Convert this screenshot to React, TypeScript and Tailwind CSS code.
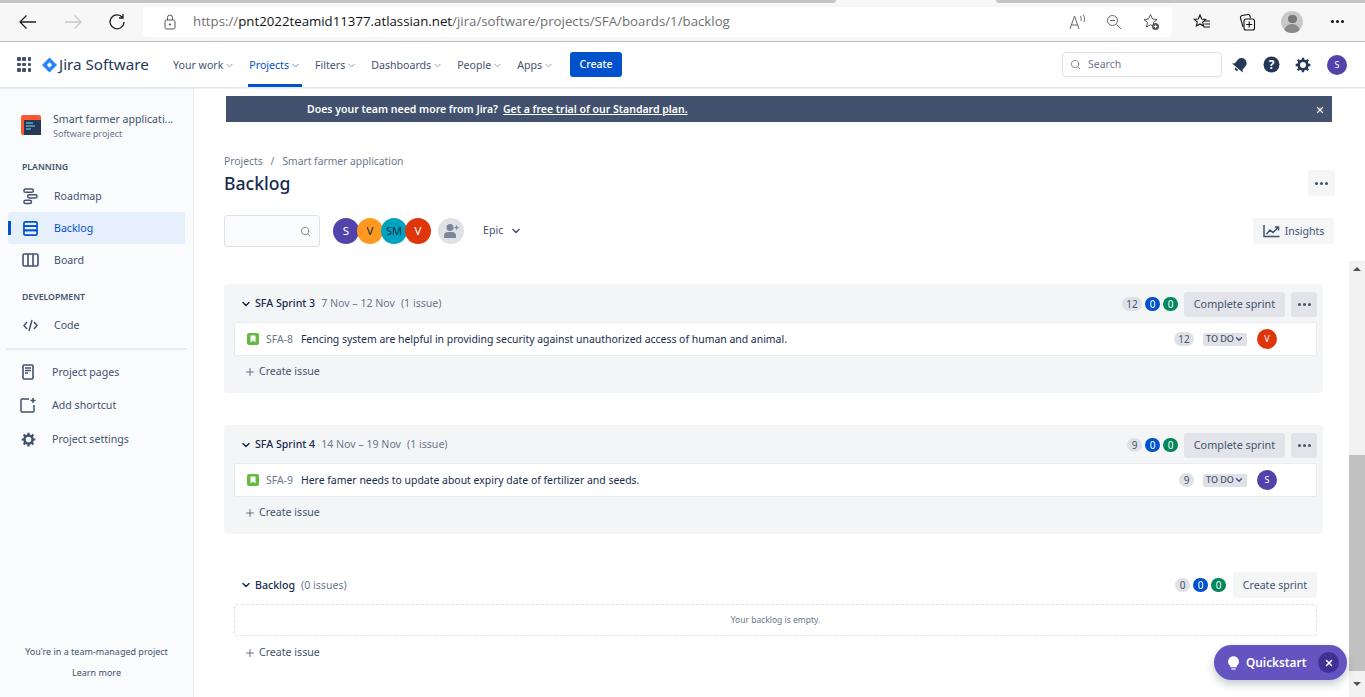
import React from "react";
import { ChevronDown, Search, Plus, X } from "lucide-react";

const font = "font-['Noto_Sans','Open_Sans',sans-serif]";

const Avatar = ({ text, color, size = "w-[26px] h-[26px]", textCls = "text-[11.5px] text-white" }: { text: string; color: string; size?: string; textCls?: string }) => (
  <div className={`${size} ${color} ${textCls} rounded-full flex items-center justify-center shrink-0`}>{text}</div>
);

const NavItem = ({ label, active }: { label: string; active?: boolean }) => (
  <div className={`relative h-full flex items-center gap-[1px] px-[1px] pt-[2px] text-[10.6px] ${active ? "text-[#0052cc]" : "text-[#42526e]"}`}>
    {label}
    <ChevronDown size={11} strokeWidth={2} className={active ? "text-[#4c7fd6]" : "text-[#8c97a8]"} />
    {active && <div className="absolute left-0 right-0 bottom-0 h-[3px] bg-[#0052cc]" />}
  </div>
);

const SideRow = ({ icon, label, active, narrow, cls = "" }: { icon: React.ReactNode; label: string; active?: boolean; narrow?: boolean; cls?: string }) => (
  <div className={`relative h-8 mx-2 rounded-[3px] flex items-center text-[10.6px] ${active ? "bg-[#e6effc] text-[#0052cc]" : "text-[#42526e]"} ${cls}`}>
    {active && <div className="absolute left-0 top-[9px] h-[14px] w-[3px] bg-[#0052cc]" />}
    <div className={`${narrow ? "w-[44px]" : "w-[46px]"} flex justify-center ${narrow ? "pr-[4px]" : "pr-[1px]"}`}>{icon}</div>
    <span className="mt-[2px]">{label}</span>
  </div>
);

const Pill = ({ n, cls }: { n: string; cls: string }) => (
  <div className={`h-[14px] min-w-[15px] rounded-full text-[10px] leading-[14px] text-center ${n === "12" ? "w-[20px]" : ""} ${cls}`}>{n}</div>
);

const Counts = ({ n }: { n: string }) => (
  <div className="flex items-center gap-[3px]">
    <Pill n={n} cls="bg-[#dfe1e6] text-[#42526e]" />
    <Pill n="0" cls="bg-[#0052cc] text-white" />
    <Pill n="0" cls="bg-[#00875a] text-white" />
  </div>
);

const CreateIssue = () => (
  <div className="flex items-center gap-[3px] pl-[20px] text-[10.6px] text-[#42526e]">
    <Plus size={12} strokeWidth={1.6} />
    Create issue
  </div>
);

const Dots = () => (
  <div className="flex gap-[2px]">
    <span className="w-[3px] h-[3px] rounded-full bg-[#42526e]" />
    <span className="w-[3px] h-[3px] rounded-full bg-[#42526e]" />
    <span className="w-[3px] h-[3px] rounded-full bg-[#42526e]" />
  </div>
);

const StoryIcon = () => (
  <svg width="12" height="12" viewBox="0 0 12 12" className="shrink-0">
    <rect width="12" height="12" rx="2" fill="#65ba43" />
    <path d="M3.5 2.5h5v7L6 7.6 3.5 9.5z" fill="#fff" />
  </svg>
);

const Sprint = ({ name, dates, issueKey, summary, points, avatar, avatarColor }: { name: string; dates: string; issueKey: string; summary: string; points: string; avatar: string; avatarColor: string }) => (
  <div className="h-[109px] rounded-[4px] bg-[#f4f5f7] pt-[6px]">
    <div className="h-[26px] flex items-center pl-[16px] pr-[6px] pt-[2px] text-[10.6px]">
      <ChevronDown size={12} strokeWidth={3} className="text-[#172b4d]" />
      <span className="ml-[3px] font-medium text-[#172b4d]">{name}</span>
      <span className="ml-[6px] text-[#6b778c]">{dates}</span>
      <span className="ml-[6px] text-[#6b778c]">(1 issue)</span>
      <div className="ml-auto flex items-center gap-[6px]">
        <Counts n={points} />
        <div className="h-[25px] w-[101px] rounded-[3px] bg-[#e2e4e9] flex items-center justify-center text-[10.8px] text-[#42526e]">Complete sprint</div>
        <div className="h-[25px] w-[26px] rounded-[3px] bg-[#e2e4e9] flex items-center justify-center"><Dots /></div>
      </div>
    </div>
    <div className="mt-[6px] ml-[10px] mr-[6px] h-[34px] bg-white border border-[#ebecf0] flex items-center pl-[12px] text-[10.45px]">
      <StoryIcon />
      <span className="ml-[7px] mt-[2px] text-[#6b778c]">{issueKey}</span>
      <span className="ml-[8px] mt-[2px] text-[#172b4d]">{summary}</span>
      <div className="ml-auto flex items-center">
        <Pill n={points} cls="bg-[#dfe1e6] text-[#42526e]" />
        <div className="ml-[9px] h-[13px] w-[44px] rounded-[2px] bg-[#dfe1e6] flex items-center pl-[3px] text-[9px] font-medium text-[#42526e]">
          TO DO
          <ChevronDown size={10} strokeWidth={3} />
        </div>
        <div className="ml-[10px] mr-[39px]">
          <Avatar text={avatar} color={avatarColor} size="w-[20px] h-[20px]" textCls="text-[9px] text-white" />
        </div>
      </div>
    </div>
    <div className="mt-[8px]"><CreateIssue /></div>
  </div>
);

const gearPath = "M12 1v5M12 18v5M1 12h5M18 12h5M4.2 4.2l3.5 3.5M16.3 16.3l3.5 3.5M4.2 19.8l3.5-3.5M16.3 7.7l3.5-3.5";

export default function App() {
  return (
    <div className={`h-screen w-full overflow-hidden flex flex-col bg-white ${font}`}>
      {/* browser chrome */}
      <div className="h-[42px] shrink-0 flex flex-col bg-[#f7f7f7] border-b border-[#bdbdbd]">
        <div className="h-[3px] flex">
          <div className="w-[836px] bg-[#c4c4c4] rounded-br-[3px]" />
          <div className="w-[160px]" />
          <div className="flex-1 bg-[#c4c4c4] rounded-bl-[3px]" />
        </div>
        <div className="flex-1 flex items-center pl-[18px] pb-[1px]">
          <svg width="20" height="16" viewBox="0 0 20 16" fill="none" stroke="#222" strokeWidth="1.3"><path d="M18 8H2M8.5 1.5 2 8l6.5 6.5" /></svg>
          <svg width="20" height="16" viewBox="0 0 20 16" fill="none" stroke="#c8c8c8" strokeWidth="1.3" className="ml-[25px]"><path d="M2 8h16M11.5 1.5 18 8l-6.5 6.5" /></svg>
          <svg width="18" height="18" viewBox="0 0 18 18" fill="none" stroke="#222" strokeWidth="1.3" className="ml-[25px]"><path d="M14.5 4.5A7 7 0 1 0 16 9M15 1v4h-4" /></svg>
          <div className="ml-[17px] h-[30px] w-[1029px] rounded-[4px] bg-white flex items-center pl-[20px] pr-[12px]">
            <svg width="14" height="16" viewBox="0 0 14 16" fill="none" stroke="#555" strokeWidth="1"><rect x="2" y="6" width="10" height="9" rx="1.5" /><path d="M4.5 6V3.5a2.5 2.5 0 0 1 5 0V6" /><circle cx="7" cy="10.5" r=".7" fill="#555" /></svg>
            <div className="ml-[16px] text-[13.25px] text-[#6f6f6f] font-['Open_Sans',sans-serif]">
              https://<span className="text-[#111]">pnt2022teamid11377.atlassian.net</span>/jira/software/projects/SFA/boards/1/backlog
            </div>
            <svg width="18" height="16" viewBox="0 0 18 16" fill="none" stroke="#666" strokeWidth="1" className="ml-auto"><path d="M1 15 5.5 2 10 15M2.5 11h6M11 2c1.5 1 1.5 3 1 5M14 1c2 2 2 5 1 7" /></svg>
            <svg width="16" height="16" viewBox="0 0 16 16" fill="none" stroke="#666" strokeWidth="1" className="ml-[19px]"><circle cx="6.5" cy="6.5" r="5" /><path d="M4 6.5h5M10.5 10.5 15 15" /></svg>
            <svg width="18" height="18" viewBox="0 0 18 18" fill="none" stroke="#555" strokeWidth="1" className="ml-[20px]"><path d="M8.5 1.5 10.5 6l4.5.5-3.5 3 1 4.5-4-2.3L4.500 14l1-4.500-3.500-3L6.500 6z" /><circle cx="13.5" cy="13.5" r="3.5" fill="#555" stroke="none" /><path d="M13.5 11.8v3.4M11.8 13.5h3.4" stroke="#fff" /></svg>
          </div>
          <svg width="18" height="18" viewBox="0 0 18 18" fill="none" stroke="#111" strokeWidth="1.1" className="ml-[21px]"><path d="M7 2 8.7 6l4 .4-3 2.7.9 4-3.6-2.1L3.4 13l.9-4-3-2.7 4-.3z" /><path d="M11 8h6M11.5 11h5.5M10.5 14h6.5" /></svg>
          <svg width="18" height="18" viewBox="0 0 18 18" fill="none" stroke="#111" strokeWidth="1.1" className="ml-[27px]"><path d="M5 14 2.5 5A2 2 0 0 1 4 2.5L10 1.5a2 2 0 0 1 2 1.5l.5 2" /><rect x="6" y="6" width="10.5" height="11" rx="2" /><path d="M11.2 8.5v6M8.2 11.5h6" /></svg>
          <div className="ml-[25px] w-[22px] h-[22px] rounded-full bg-[#c9c9c9] overflow-hidden flex flex-col items-center">
            <div className="mt-[4px] w-[9px] h-[9px] rounded-full bg-[#777]" />
            <div className="mt-[1px] w-[16px] h-[10px] rounded-t-full bg-[#8a8a8a]" />
          </div>
          <div className="ml-[28px] flex gap-[2px]">
            <span className="w-[3px] h-[3px] rounded-full bg-[#111]" />
            <span className="w-[3px] h-[3px] rounded-full bg-[#111]" />
            <span className="w-[3px] h-[3px] rounded-full bg-[#111]" />
          </div>
        </div>
      </div>

      {/* jira nav */}
      <div className="h-[46px] shrink-0 flex items-center pl-[17px] pr-[18px] bg-white border-b border-[#e4e6ea] shadow-[0_1px_1px_rgba(9,30,66,0.06)] z-10">
        <div className="grid grid-cols-3 gap-[2px] w-[14px]">
          {[0, 1, 2, 3, 4, 5, 6, 7, 8].map((i) => (
            <span key={i} className="w-[3.5px] h-[3.5px] rounded-[1px] bg-[#42526e]" />
          ))}
        </div>
        <svg width="15" height="16" viewBox="0 0 16 16" className="ml-[11px]">
          <path d="M8 0 16 8l-8 8-8-8z" fill="#2684ff" />
          <rect x="6" y="6" width="4" height="4" transform="rotate(45 8 8)" fill="#fff" />
        </svg>
        <span className="ml-[2px] text-[15.2px] text-[#253858] w-[92px] whitespace-nowrap">Jira Software</span>
        <div className="ml-[21px] h-full flex gap-[12px] items-stretch">
          <NavItem label="Your work" />
          <NavItem label="Projects" active />
          <NavItem label="Filters" />
          <NavItem label="Dashboards" />
          <NavItem label="People" />
          <NavItem label="Apps" />
        </div>
        <div className="ml-[15px] h-[25px] w-[52px] rounded-[3px] bg-[#0052cc] text-white text-[10.6px] font-medium flex items-center justify-center">Create</div>
        <div className="ml-auto h-[25px] w-[160px] rounded-[4px] border-[1.5px] border-[#dfe1e6] flex items-center pl-[7px] text-[10.5px] text-[#6b778c]">
          <Search size={11} strokeWidth={1.8} />
          <span className="ml-[7px]">Search</span>
        </div>
        <svg width="16" height="16" viewBox="0 0 16 16" className="ml-[10px]" fill="#253858"><g transform="rotate(40 8 8)"><path d="M8 .5a5 5 0 0 0-5 5V10l-2 2h14l-2-2V5.500a5 5 0 0 0-5-5z" /><path d="M6 13a2 2 0 0 0 4 0z" /></g></svg>
        <svg width="17" height="17" viewBox="0 0 17 17" className="ml-[15px]"><circle cx="8.5" cy="8.5" r="8" fill="#253858" /><text x="8.5" y="12.8" textAnchor="middle" fontSize="12" fontWeight="700" fill="#fff">?</text></svg>
        <svg width="16" height="16" viewBox="0 0 24 24" className="ml-[15px]" fill="none" stroke="#253858" strokeWidth="4"><circle cx="12" cy="12" r="6.5" /><path d={gearPath} strokeWidth="3.5" /></svg>
        <div className="ml-[16px]">
          <Avatar text="S" color="bg-[#5243aa]" size="w-[20px] h-[20px]" textCls="text-[9px] text-white" />
        </div>
      </div>

      {/* body */}
      <div className="flex-1 min-h-0 flex">
        <aside className="w-[194px] shrink-0 bg-[#fafbfc] border-r border-[#ebecf0] flex flex-col">
          <div className="mt-[22px] flex items-center pl-[21px]">
            <svg width="20" height="20" viewBox="0 0 20 20">
              <rect width="20" height="20" rx="2" fill="#ff5630" />
              <rect x="3" y="5" width="17" height="15" fill="#253858" />
              <path d="M5 8h7M5 11h9M5 14h5" stroke="#79e2f2" strokeWidth="1.2" />
            </svg>
            <div className="ml-[12px] mt-[2px]">
              <div className="text-[10.6px] leading-[15px] text-[#42526e] whitespace-nowrap">Smart farmer applicati...</div>
              <div className="text-[9px] leading-[13px] text-[#6b778c]">Software project</div>
            </div>
          </div>
          <div className="mt-[21px] pl-[22px] text-[8.7px] leading-[12px] font-semibold text-[#42526e]">PLANNING</div>
          <div className="mt-[7px]">
            <SideRow
              label="Roadmap"
              icon={<svg width="15" height="17" viewBox="0 0 16 18" fill="none" stroke="#42526e" strokeWidth="1.6"><rect x="1" y="1" width="10" height="3.5" rx="1.7" /><rect x="5" y="7" width="10" height="3.5" rx="1.7" /><rect x="1" y="13" width="8" height="3.5" rx="1.7" /></svg>}
            />
            <SideRow
              label="Backlog"
              active
              icon={<svg width="15" height="15" viewBox="0 0 16 16" fill="none" stroke="#0052cc" strokeWidth="1.8"><rect x="1" y="1" width="14" height="4.5" rx="1.5" /><rect x="1" y="5.5" width="14" height="4.5" /><rect x="1" y="10" width="14" height="5" rx="1.5" /></svg>}
            />
            <SideRow
              label="Board"
              icon={<svg width="17" height="14" viewBox="0 0 17 14" fill="none" stroke="#42526e" strokeWidth="1.6"><rect x="1" y="1" width="15" height="12" rx="1.5" /><path d="M6 1v12M11 1v12" /></svg>}
            />
          </div>
          <div className="mt-[15px] pl-[22px] text-[8.7px] leading-[12px] font-semibold text-[#42526e]">DEVELOPMENT</div>
          <div className="mt-[6px]">
            <SideRow
              label="Code"
              icon={<svg width="15" height="13" viewBox="0 0 15 13" fill="none" stroke="#42526e" strokeWidth="1.5"><path d="M4 3 1 6.5 4 10M11 3l3 3.5-3 3.5M9 1 6 12" /></svg>}
            />
          </div>
          <div className="mt-[7px] mx-[6px] h-[2px] bg-[#ebecf0]" />
          <div className="mt-[5px]">
            <SideRow
              label="Project pages"
              narrow
              cls="!h-[33px]"
              icon={<svg width="12" height="16" viewBox="0 0 12 16" fill="none" stroke="#42526e" strokeWidth="1.6"><rect x="1" y="1" width="10" height="14" rx="1" /><path d="M3 4h6M3 6.5h6M3 9h3" /></svg>}
            />
            <SideRow
              label="Add shortcut"
              narrow
              cls="!h-[34px]"
              icon={<svg width="16" height="16" viewBox="0 0 16 16" fill="none" stroke="#42526e" strokeWidth="1.5"><path d="M9 2H2a1 1 0 0 0-1 1v11a1 1 0 0 0 1 1h11a1 1 0 0 0 1-1V8" /><path d="M13 1v5M10.5 3.5h5" /></svg>}
            />
            <SideRow
              label="Project settings"
              narrow
              cls="!h-[34px]"
              icon={<svg width="15" height="15" viewBox="0 0 24 24" fill="none" stroke="#42526e" strokeWidth="4"><circle cx="12" cy="12" r="6.5" /><path d={gearPath} strokeWidth="3.5" /></svg>}
            />
          </div>
          <div className="mt-auto pb-[18px] text-center text-[9px] text-[#42526e]">
            <div>You're in a team-managed project</div>
            <div className="mt-[7px]">Learn more</div>
          </div>
        </aside>

        <main className="relative flex-1 min-w-0 flex flex-col">
          <div className="h-[173px] shrink-0 pl-[30px] pr-[31px] flex flex-col">
            <div className="mt-[8px] ml-[2px] h-[26px] w-[1106px] bg-[#42526e] pt-[2px] text-white text-[10.5px] flex items-center relative">
              <span className="ml-[81px] font-semibold">Does your team need more from Jira?</span>
              <span className="ml-[5px] font-semibold underline">Get a free trial of our Standard plan.</span>
              <X size={10} strokeWidth={3} className="absolute right-[7px] top-[9px]" />
            </div>
            <div className="mt-[32px] text-[10.3px] leading-[14px] text-[#6b778c]">
              Projects<span className="mx-[8px]">/</span>Smart farmer application
            </div>
            <div className="mt-[2px] flex items-center justify-between">
              <h1 className="text-[17.6px] leading-[26px] font-medium text-[#172b4d]">Backlog</h1>
              <div className="h-[26px] w-[27px] mr-[-1px] rounded-[3px] bg-[#f4f5f7] flex items-center justify-center"><Dots /></div>
            </div>
            <div className="mt-[19px] flex items-center">
              <div className="h-[32px] w-[96px] rounded-[3px] border-[1.5px] border-[#dfe1e6] bg-[#fafbfc] flex items-center justify-end pr-[8px]">
                <Search size={11} strokeWidth={1.8} className="text-[#6b778c]" />
              </div>
              <div className="ml-[13px] flex">
                <Avatar text="S" color="bg-[#5243aa]" />
                <Avatar text="V" color="bg-[#ff991f]" size="w-[26px] h-[26px] -ml-[2px]" textCls="text-[11.5px] text-[#172b4d]" />
                <Avatar text="SM" color="bg-[#00a3bf]" size="w-[26px] h-[26px] -ml-[2px]" textCls="text-[11px] text-[#172b4d]" />
                <Avatar text="V" color="bg-[#de350b]" size="w-[26px] h-[26px] -ml-[2px]" />
              </div>
              <div className="ml-[7px] w-[26px] h-[26px] rounded-full bg-[#dfe1e6] flex items-center justify-center">
                <svg width="15" height="14" viewBox="0 0 15 14" fill="#7a869a"><circle cx="6" cy="3.5" r="3.5" /><path d="M0 12a4 4 0 0 1 4-4h4a4 4 0 0 1 4 4v2H0z" /><path d="M10.5 3h4v1.2h-4zM11.9 1.5h1.2v4h-1.2z" /></svg>
              </div>
              <div className="ml-[19px] flex items-center gap-[7px] text-[10.6px] text-[#42526e]">
                Epic
                <ChevronDown size={12} strokeWidth={3} />
              </div>
              <div className="ml-auto h-[26px] w-[81px] rounded-[3px] bg-[#f4f5f7] flex items-center justify-center gap-[5px] pt-[2px] text-[10.5px] text-[#42526e]">
                <svg width="17" height="14" viewBox="0 0 17 14" fill="none" stroke="#42526e" strokeWidth="1.5" className="-mt-[2px]"><path d="M1 1v11.5h15.5M3.5 10l3.5-4 3 2.5L15 3.5M12 3h3.5v3.5" /></svg>
                Insights
              </div>
            </div>
          </div>

          <div className="flex-1 min-h-0 flex">
            <div className="flex-1 min-w-0 pl-[30px] pr-[26px] pt-[23px] flex flex-col">
              <Sprint name="SFA Sprint 3" dates="7 Nov – 12 Nov" issueKey="SFA-8" summary="Fencing system are helpful in providing security against unauthorized access of human and animal." points="12" avatar="V" avatarColor="bg-[#de350b]" />
              <div className="mt-[32px]">
                <Sprint name="SFA Sprint 4" dates="14 Nov – 19 Nov" issueKey="SFA-9" summary="Here famer needs to update about expiry date of fertilizer and seeds." points="9" avatar="S" avatarColor="bg-[#5243aa]" />
              </div>
              <div className="mt-[38px] pl-[10px] pr-[6px] text-[10.6px]">
                <div className="h-[26px] flex items-center pl-[6px]">
                  <ChevronDown size={12} strokeWidth={3} className="text-[#172b4d]" />
                  <span className="ml-[3px] mt-[2px] font-medium text-[#172b4d]">Backlog</span>
                  <span className="ml-[6px] mt-[2px] text-[#6b778c]">(0 issues)</span>
                  <div className="ml-auto flex items-center gap-[7px]">
                    <Counts n="0" />
                    <div className="h-[26px] w-[84px] rounded-[3px] bg-[#f4f5f7] pt-[2px] flex items-center justify-center text-[#42526e]">Create sprint</div>
                  </div>
                </div>
                <div className="mt-[6px] h-[32px] rounded-[2px] border border-dashed border-[#dfe1e6] flex items-center justify-center text-[8.5px] text-[#6b778c]">Your backlog is empty.</div>
              </div>
              <div className="mt-[9px]"><CreateIssue /></div>
            </div>

            <div className="w-[16px] shrink-0 bg-[#f1f1f1] flex flex-col items-center">
              <div className="h-[16px] flex items-center justify-center">
                <div className="border-x-[4px] border-x-transparent border-b-[4px] border-b-[#505050]" />
              </div>
              <div className="mt-[178px] h-[216px] w-full bg-[#c1c1c1]" />
              <div className="mt-auto h-[26px] flex items-center justify-center">
                <div className="border-x-[4px] border-x-transparent border-t-[4px] border-t-[#505050]" />
              </div>
            </div>
          </div>

          {/* quickstart floats over the page */}
          <div className="absolute left-[1020px] bottom-[17px] h-[35px] w-[133px] rounded-full bg-[#6554c0] text-white shadow-[0_4px_8px_rgba(9,30,66,0.25)] flex items-center pl-[14px]">
            <svg width="11" height="14" viewBox="0 0 12 15" fill="#fff"><path d="M6 0a6 6 0 0 1 3.5 10.8V12h-7v-1.200A6 6 0 0 1 6 0z" /><rect x="3.5" y="13" width="5" height="2" rx="1" fill="#c0b6f2" /></svg>
            <span className="ml-[7px] text-[11.8px] font-semibold">Quickstart</span>
            <div className="ml-auto mr-[8px] w-[21px] h-[21px] rounded-full bg-[#403294] flex items-center justify-center">
              <X size={10} strokeWidth={3.5} />
            </div>
          </div>
        </main>
      </div>
    </div>
  );
}
